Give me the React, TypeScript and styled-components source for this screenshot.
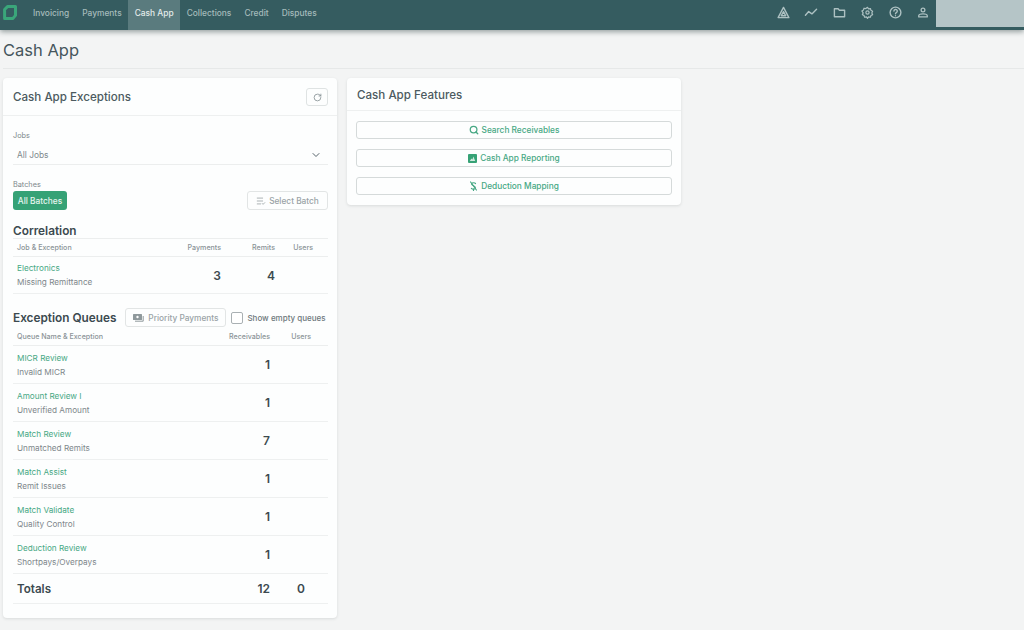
import React from "react";
import styled, { createGlobalStyle } from "styled-components";
import { RotateCw, Search, ChevronDown, ListCheck } from "lucide-react";

const Global = createGlobalStyle`
  html, body { margin: 0; padding: 0; }
  body { background: #f3f4f4; font-family: Inter, "Noto Sans", sans-serif; color: #3c4a50; overflow: hidden; }
`;

const Page = styled.div`
  width: 1024px;
  height: 630px;
  overflow: hidden;
`;

const TopBar = styled.header`
  height: 30px;
  background: #355c60;
  display: flex;
  align-items: stretch;
  box-shadow: 0 2px 5px rgba(40, 60, 60, 0.45);
`;

const Logo = styled.div`
  width: 26.5px;
  box-sizing: border-box;
  padding: 0 0 5px 3px;
  display: flex;
  align-items: center;
`;

const NavItem = styled.div<{ $active?: boolean }>`
  padding: 0 6.5px 4px;
  display: flex;
  align-items: center;
  font-size: 8.4px;
  font-weight: 500;
  color: ${(p) => (p.$active ? "#e4eceb" : "#a5bbbb")};
  background: ${(p) => (p.$active ? "#5a7b7e" : "transparent")};
`;

const NavIcons = styled.div`
  margin-left: auto;
  display: flex;
  align-items: center;
  gap: 10px;
  padding: 0 4px 5px 0;
  color: #adc1c2;
`;

const NavIconSlot = styled.div`
  width: 18px;
  display: flex;
  justify-content: center;
`;

const UserBlock = styled.div`
  width: 88px;
  height: 27px;
  background: #b5c5c7;
`;

const TitleRow = styled.div`
  height: 39px;
  margin: 0 0 9px 3px;
  border-bottom: 1px solid #e6e8e8;
  display: flex;
  align-items: center;
  padding-top: 2px;
  box-sizing: border-box;
  font-size: 16.5px;
  font-weight: 400;
  color: #46565c;
`;

const Columns = styled.div`
  display: flex;
  align-items: flex-start;
  gap: 10px;
  padding-left: 3px;
`;

const Card = styled.section<{ $width: number; $height: number }>`
  width: ${(p) => p.$width}px;
  height: ${(p) => p.$height}px;
  box-sizing: border-box;
  background: #fdfefe;
  border-radius: 4px;
  box-shadow: 0 1px 3px rgba(60, 70, 70, 0.14);
`;

const CardHead = styled.div<{ $height: number }>`
  height: ${(p) => p.$height}px;
  box-sizing: border-box;
  padding: 1px 9px 0 10px;
  display: flex;
  align-items: center;
  justify-content: space-between;
  border-bottom: 1px solid #eef0f0;
  font-size: 11.6px;
  font-weight: 500;
  color: #4c5a60;
`;

const IconButton = styled.div`
  width: 22px;
  height: 18px;
  box-sizing: border-box;
  border: 1px solid #dfe3e3;
  border-radius: 3px;
  display: flex;
  align-items: center;
  justify-content: center;
  color: #7b878b;
`;

const CardBody = styled.div`
  padding: 15px 9px 0 10px;
`;

const FieldLabel = styled.div`
  font-size: 7.3px;
  line-height: 10px;
  color: #7c878b;
`;

const SelectBox = styled.div`
  height: 24px;
  box-sizing: border-box;
  margin: 0 0 15px;
  padding: 4px 6px 0 4px;
  display: flex;
  align-items: center;
  justify-content: space-between;
  border-bottom: 1px solid #eceeee;
  font-size: 8.4px;
  color: #80898d;
`;

const BatchRow = styled.div`
  margin-top: 1px;
  display: flex;
  justify-content: space-between;
  align-items: center;
  height: 19px;
`;

const GreenButton = styled.div`
  width: 54px;
  height: 19px;
  border-radius: 3px;
  background: #36a276;
  color: #e8f6f0;
  font-size: 8.3px;
  font-weight: 500;
  display: flex;
  align-items: center;
  justify-content: center;
`;

const GhostButton = styled.div<{ $width: number }>`
  width: ${(p) => p.$width}px;
  height: 19px;
  box-sizing: border-box;
  border: 1px solid #e2e5e5;
  border-radius: 3px;
  color: #9aa3a6;
  font-size: 8.3px;
  font-weight: 500;
  display: flex;
  align-items: center;
  justify-content: center;
  gap: 3px;
`;

const SectionTitle = styled.h3`
  margin: 0;
  font-size: 11.8px;
  font-weight: 600;
  color: #3c4a50;
  white-space: nowrap;
`;

const CorrelationTitle = styled(SectionTitle)`
  margin-top: 13px;
  line-height: 17px;
  border-bottom: 1px solid #eceeee;
  height: 15px;
`;

const HeaderRow = styled.div<{ $cols: string }>`
  display: grid;
  grid-template-columns: ${(p) => p.$cols};
  align-items: center;
  height: 18px;
  box-sizing: border-box;
  padding: 0 0 1px 4px;
  border-bottom: 1px solid #eceeee;
  font-size: 7.1px;
  font-weight: 500;
  color: #8b9498;
`;

const HeadCell = styled.div`
  text-align: right;
`;

const DataRow = styled.div<{ $cols: string; $height: number }>`
  display: grid;
  grid-template-columns: ${(p) => p.$cols};
  align-items: center;
  height: ${(p) => p.$height}px;
  box-sizing: border-box;
  padding-left: 4px;
  border-bottom: 1px solid #eef0f0;
`;

const RowName = styled.div`
  font-size: 8.2px;
  line-height: 14px;
  color: #47a884;
`;

const RowSub = styled.div`
  font-size: 8.2px;
  line-height: 14px;
  color: #7e878b;
`;

const Count = styled.div<{ $inset?: number }>`
  text-align: right;
  padding-right: ${(p) => p.$inset ?? 0}px;
  font-size: 12px;
  font-weight: 600;
  color: #3c4a50;
`;

const QueueToolbar = styled.div`
  margin: 14px 0 1px;
  height: 19px;
  display: flex;
  align-items: center;
`;

const PriorityButton = styled(GhostButton)`
  margin-left: 9px;
  gap: 4px;
  flex: none;
`;

const CheckBox = styled.div`
  width: 12px;
  height: 12px;
  margin-left: 5px;
  flex: none;
  box-sizing: border-box;
  border: 1px solid #a9b0b3;
  border-radius: 2px;
  background: #fff;
`;

const CheckLabel = styled.div`
  margin-left: 4px;
  font-size: 8px;
  font-weight: 500;
  color: #6d787c;
  white-space: nowrap;
`;

const TotalsLabel = styled.div`
  font-size: 11.6px;
  font-weight: 600;
  color: #3c4a50;
`;

const FeatureList = styled.div`
  padding: 10px 9px 0;
  display: flex;
  flex-direction: column;
  gap: 10px;
`;

const FeatureButton = styled.div`
  height: 18px;
  box-sizing: border-box;
  border: 1px solid #d5dada;
  border-radius: 3px;
  display: flex;
  align-items: center;
  justify-content: center;
  gap: 3px;
  color: #47a884;
  font-size: 8.3px;
  font-weight: 500;
`;

const QUEUE_COLS = "203px 50px 41px";
const CORR_COLS = "164px 40px 54px 38px";

const queues = [
  { name: "MICR Review", sub: "Invalid MICR", count: 1 },
  { name: "Amount Review I", sub: "Unverified Amount", count: 1 },
  { name: "Match Review", sub: "Unmatched Remits", count: 7 },
  { name: "Match Assist", sub: "Remit Issues", count: 1 },
  { name: "Match Validate", sub: "Quality Control", count: 1 },
  { name: "Deduction Review", sub: "Shortpays/Overpays", count: 1 },
];

const stroke = { fill: "none", stroke: "currentColor", strokeWidth: 1.5, strokeLinecap: "round", strokeLinejoin: "round" } as const;

const LogoMark = () => (
  <svg width="14" height="15" viewBox="0 0 14 15">
    <path d="M4.5 1.6h8v8.8L10 13.4H1.6V4.5z" fill="none" stroke="#3aa67a" strokeWidth="3" strokeLinejoin="round" />
  </svg>
);

const navIcons = [
  <svg key="a" width="13" height="13" viewBox="0 0 14 14" {...stroke}><path d="M7 1.5 12.8 12.5H1.2z" /><path d="M7 6 9.4 10.5H4.6z" /></svg>,
  <svg key="b" width="14" height="13" viewBox="0 0 14 14" {...stroke}><path d="M1 10 4.5 6l3.5 2.5L13 3.5" /></svg>,
  <svg key="c" width="13" height="13" viewBox="0 0 14 14" {...stroke}><path d="M1.5 3h4l1.2 1.5h5.8v7h-11z" /></svg>,
  <svg key="d" width="13" height="13" viewBox="0 0 24 24" {...stroke} strokeWidth={2.2}><circle cx="12" cy="12" r="3" /><path d="M12 2.5l2 2.8 3.4-.6 1 3.3 3 1.7-1.4 3.1 1.4 3.1-3 1.5-1 3.4-3.4-.7-2 2.9-2-2.9-3.4.7-1-3.4-3-1.5 1.4-3.1L1.6 9.1l3-1.7 1-3.3 3.4.6z" /></svg>,
  <svg key="e" width="13" height="13" viewBox="0 0 14 14" {...stroke}><circle cx="7" cy="7" r="5.8" /><path d="M5.3 5.5a1.8 1.8 0 1 1 2.6 1.6c-.6.3-.9.7-.9 1.3" /><path d="M7 10.4v.1" /></svg>,
  <svg key="f" width="12" height="13" viewBox="0 0 14 14" {...stroke}><circle cx="7" cy="4" r="2.2" /><path d="M2 12.2h10v-1.4c0-1.4-2-2.3-5-2.3s-5 .9-5 2.3z" /></svg>,
];

const ReportIcon = () => (
  <svg width="9" height="9" viewBox="0 0 9 9">
    <rect width="9" height="9" rx="1" fill="#36a276" />
    <path d="M1.8 7 3.4 4.4l1 1.2L5.4 2.6 7.2 7z" fill="#cfeade" />
  </svg>
);

const DeductionIcon = () => (
  <svg width="9" height="10" viewBox="0 0 9 10" {...stroke} strokeWidth={1.2}>
    <path d="M6.5 2.6C6 1.6 3 1.3 2.6 2.8 2.2 4.6 6.6 4.6 6.4 7c-.2 1.4-3 1.5-4 .4" />
    <path d="M4.5 8.2v1.3M1.6 1l5.8 8" />
  </svg>
);

const MoneyIcon = () => (
  <svg width="11" height="8" viewBox="0 0 11 8">
    <rect x="0" y="0" width="9" height="6" rx="0.6" fill="#8f999c" />
    <circle cx="4.5" cy="3" r="1.2" fill="#fdfefe" />
    <path d="M10.2 2v5.2H2" fill="none" stroke="#8f999c" strokeWidth="1" />
  </svg>
);

export default function App() {
  return (
    <Page>
      <Global />
      <TopBar>
        <Logo><LogoMark /></Logo>
        <NavItem>Invoicing</NavItem>
        <NavItem>Payments</NavItem>
        <NavItem $active>Cash App</NavItem>
        <NavItem>Collections</NavItem>
        <NavItem>Credit</NavItem>
        <NavItem>Disputes</NavItem>
        <NavIcons>
          {navIcons.map((icon, i) => (
            <NavIconSlot key={i}>{icon}</NavIconSlot>
          ))}
        </NavIcons>
        <UserBlock />
      </TopBar>

      <TitleRow>Cash App</TitleRow>

      <Columns>
        <Card $width={334} $height={540}>
          <CardHead $height={38}>
            Cash App Exceptions
            <IconButton><RotateCw size={9} /></IconButton>
          </CardHead>
          <CardBody>
            <FieldLabel>Jobs</FieldLabel>
            <SelectBox>
              All Jobs
              <ChevronDown size={12} color="#56636a" />
            </SelectBox>
            <FieldLabel>Batches</FieldLabel>
            <BatchRow>
              <GreenButton>All Batches</GreenButton>
              <GhostButton $width={81}>
                <ListCheck size={10} />
                Select Batch
              </GhostButton>
            </BatchRow>

            <CorrelationTitle>Correlation</CorrelationTitle>
            <HeaderRow $cols={CORR_COLS}>
              <div>Job &amp; Exception</div>
              <HeadCell>Payments</HeadCell>
              <HeadCell>Remits</HeadCell>
              <HeadCell>Users</HeadCell>
            </HeaderRow>
            <DataRow $cols={CORR_COLS} $height={37}>
              <div>
                <RowName>Electronics</RowName>
                <RowSub>Missing Remittance</RowSub>
              </div>
              <Count>3</Count>
              <Count>4</Count>
            </DataRow>

            <QueueToolbar>
              <SectionTitle>Exception Queues</SectionTitle>
              <PriorityButton $width={101}>
                <MoneyIcon />
                Priority Payments
              </PriorityButton>
              <CheckBox />
              <CheckLabel>Show empty queues</CheckLabel>
            </QueueToolbar>
            <HeaderRow $cols={QUEUE_COLS}>
              <div>Queue Name &amp; Exception</div>
              <HeadCell>Receivables</HeadCell>
              <HeadCell>Users</HeadCell>
            </HeaderRow>
            {queues.map((q) => (
              <DataRow key={q.name} $cols={QUEUE_COLS} $height={38}>
                <div>
                  <RowName>{q.name}</RowName>
                  <RowSub>{q.sub}</RowSub>
                </div>
                <Count>{q.count}</Count>
              </DataRow>
            ))}
            <DataRow $cols={QUEUE_COLS} $height={30}>
              <TotalsLabel>Totals</TotalsLabel>
              <Count>12</Count>
              <Count $inset={6}>0</Count>
            </DataRow>
          </CardBody>
        </Card>

        <Card $width={334} $height={127}>
          <CardHead $height={33}>Cash App Features</CardHead>
          <FeatureList>
            <FeatureButton><Search size={10} strokeWidth={3} />Search Receivables</FeatureButton>
            <FeatureButton><ReportIcon />Cash App Reporting</FeatureButton>
            <FeatureButton><DeductionIcon />Deduction Mapping</FeatureButton>
          </FeatureList>
        </Card>
      </Columns>
    </Page>
  );
}
